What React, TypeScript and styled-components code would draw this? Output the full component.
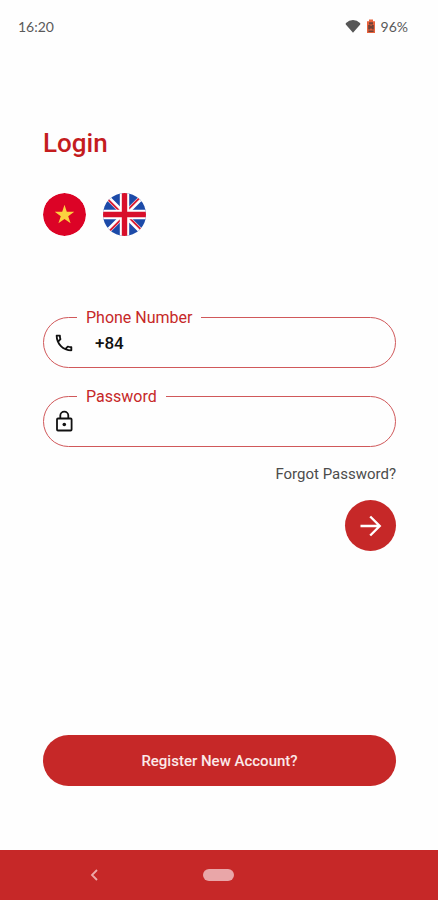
import React from 'react';
import styled, { createGlobalStyle } from 'styled-components';

const red = '#c62828';

const GlobalStyle = createGlobalStyle`
  *, *::before, *::after { box-sizing: border-box; }
  body {
    margin: 0;
    background: #fefefe;
    font-family: Roboto, "Liberation Sans", sans-serif;
    color: #1a1a1a;
  }
  button, input { font: inherit; }
`;

const Screen = styled.div`
  display: flex;
  flex-direction: column;
  min-height: 100vh;
`;

const StatusBar = styled.header`
  display: flex;
  align-items: center;
  justify-content: space-between;
  height: 52px;
  padding: 0 30px 0 18px;
  font-family: Lato, Roboto, sans-serif;
  font-size: 14px;
  color: #5a5a5a;
`;

const StatusGroup = styled.div`
  display: flex;
  align-items: center;
  gap: 5px;
`;

const Main = styled.main`
  display: flex;
  flex: 1;
  flex-direction: column;
  padding: 74px 42px 64px 43px;
`;

const Title = styled.h1`
  margin: 0;
  font-size: 26px;
  line-height: 34px;
  font-weight: 500;
  color: #c41c1e;
`;

const Languages = styled.div`
  display: flex;
  gap: 17px;
  margin-top: 33px;
`;

const FlagButton = styled.button`
  width: 43px;
  height: 43px;
  padding: 0;
  border: 0;
  border-radius: 50%;
  background: none;
  overflow: hidden;
  cursor: pointer;

  svg { display: block; width: 100%; height: 100%; }
`;

const Form = styled.form`
  display: flex;
  flex-direction: column;
  align-items: flex-end;
  margin-top: 71px;
`;

const Fieldset = styled.fieldset`
  width: 100%;
  min-width: 0;
  margin: 0 0 18px;
  padding: 0 12px 0 33px;
  border: 1px solid #d0585a;
  border-radius: 26px;
`;

const Legend = styled.legend`
  padding: 2px 9px 0;
  font-size: 16px;
  line-height: 18px;
  color: ${red};
`;

const FieldRow = styled.div`
  display: flex;
  align-items: center;
  gap: 20px;
  height: 40px;
  margin: 0 0 0 -24px;
  padding-bottom: 8px;

  svg { flex: none; }
`;

const Input = styled.input`
  flex: 1;
  min-width: 0;
  padding: 0;
  border: 0;
  outline: 0;
  background: transparent;
  font-size: 17px;
  line-height: 20px;
  font-weight: 500;
  color: #111;
`;

const ForgotLink = styled.a`
  font-size: 15px;
  line-height: 18px;
  color: #4c4c4c;
  text-decoration: none;
`;

const SubmitButton = styled.button`
  display: grid;
  place-items: center;
  width: 51px;
  height: 51px;
  margin-top: 17px;
  padding: 0;
  border: 0;
  border-radius: 50%;
  background: ${red};
  cursor: pointer;
`;

const RegisterButton = styled.button`
  height: 51px;
  margin-top: auto;
  border: 0;
  border-radius: 26px;
  background: ${red};
  font-size: 15px;
  font-weight: 500;
  color: #fbe9e9;
  cursor: pointer;
`;

const NavBar = styled.nav`
  display: grid;
  grid-template-columns: repeat(3, 1fr);
  align-items: center;
  justify-items: center;
  height: 50px;
  padding: 0 32px;
  background: ${red};
`;

const NavButton = styled.button`
  display: grid;
  place-items: center;
  width: 48px;
  height: 40px;
  padding: 0;
  border: 0;
  background: none;
  cursor: pointer;
`;

const HomePill = styled.span`
  width: 31px;
  height: 12px;
  border-radius: 6px;
  background: #e9a6a8;
`;

const WifiIcon = () => (
  <svg width="16" height="14" viewBox="0 0 16 14" aria-hidden="true">
    <path d="M8 13.8 0.8 5.4Q0.4 4.6 1 4Q4 1 8 1t7 3q.6.6.2 1.4Z" fill="#565656" />
  </svg>
);

const BatteryIcon = () => (
  <svg width="10" height="15" viewBox="0 0 10 15" aria-hidden="true">
    <path d="M3 .5h4v1.7h2V14H1V2.2h2Z" fill="#e8623c" />
    <path d="M3 3.2h4v2.3H3ZM2.4 11.4h5.2V13H2.4ZM2.2 6h2l.8 1.2L6 6h1.8v4.4H6L5 9l-1 1.4H2.2Z" fill="#6f4238" />
  </svg>
);

const VietnamFlag = () => (
  <svg viewBox="0 0 43 43" aria-hidden="true">
    <circle cx="21.5" cy="21.5" r="21.5" fill="#dc0326" />
    <path
      d="m21.5 11.7 2.3 7.1h7.5l-6.1 4.4 2.4 7.1-6.1-4.4-6.1 4.4 2.4-7.1-6.1-4.4h7.5Z"
      fill="#fbd03f"
    />
  </svg>
);

const UnitedKingdomFlag = () => (
  <svg viewBox="0 0 43 43" aria-hidden="true">
    <rect width="43" height="43" fill="#1c4aa8" />
    <path d="M4 4 39 39M39 4 4 39" stroke="#fff" strokeWidth="5" />
    <path d="m5 6.5 13 13M36.5 5 23 18.5M38 36.5 25 23.5M6.5 38l13-13" stroke="#d81e35" strokeWidth="1.8" />
    <path d="M21.5 0v43M0 21.5h43" stroke="#fff" strokeWidth="9.4" />
    <path d="M21.5 0v43M0 21.5h43" stroke="#d80f2b" strokeWidth="5.4" />
  </svg>
);

const PhoneIcon = () => (
  <svg width="22" height="22" viewBox="0 0 24 24" aria-hidden="true">
    <path
      d="M6.54 5c.06.89.21 1.76.45 2.59l-1.2 1.2c-.41-1.2-.67-2.47-.76-3.79h1.51m9.86 12.02c.85.24 1.72.39 2.6.45v1.49c-1.32-.09-2.59-.35-3.8-.75l1.2-1.19M7.5 3H4c-.55 0-1 .45-1 1 0 9.39 7.61 17 17 17 .55 0 1-.45 1-1v-3.49c0-.55-.45-1-1-1-1.24 0-2.45-.2-3.57-.57-.1-.04-.21-.05-.31-.05-.26 0-.51.1-.71.29l-2.2 2.2c-2.83-1.45-5.15-3.76-6.59-6.59l2.2-2.2c.28-.28.36-.67.25-1.02C8.7 6.45 8.5 5.25 8.5 4c0-.55-.45-1-1-1Z"
      fill="#111"
    />
  </svg>
);

const LockIcon = () => (
  <svg width="22" height="24" viewBox="0 0 22 24" fill="none" aria-hidden="true">
    <rect x="4" y="8.5" width="14.6" height="12" rx="1" stroke="#111" strokeWidth="1.8" />
    <path d="M7.3 8.5V5.6a4 4 0 0 1 8 0v2.9" stroke="#111" strokeWidth="1.8" />
    <circle cx="11.3" cy="14.5" r="1.8" fill="#111" />
  </svg>
);

const ArrowIcon = () => (
  <svg width="24" height="24" viewBox="0 0 24 24" fill="none" aria-hidden="true">
    <path d="M1.5 12h19M11.2 2.5l9.5 9.5-9.5 9.5" stroke="#fff" strokeWidth="2.4" />
  </svg>
);

const BackIcon = () => (
  <svg width="8" height="12" viewBox="0 0 8 12" fill="none" aria-hidden="true">
    <path d="M7 1 2 6l5 5" stroke="#eda9a9" strokeWidth="1.8" />
  </svg>
);

type FieldProps = {
  id: string;
  label: string;
  type: string;
  defaultValue?: string;
  icon: React.ReactNode;
};

const Field = ({ id, label, type, defaultValue, icon }: FieldProps) => (
  <Fieldset>
    <Legend>
      <label htmlFor={id}>{label}</label>
    </Legend>
    <FieldRow>
      {icon}
      <Input id={id} type={type} defaultValue={defaultValue} />
    </FieldRow>
  </Fieldset>
);

export default function App() {
  return (
    <>
      <GlobalStyle />
      <Screen>
        <StatusBar>
          <span>16:20</span>
          <StatusGroup>
            <WifiIcon />
            <BatteryIcon />
            <span>96%</span>
          </StatusGroup>
        </StatusBar>
        <Main>
          <Title>Login</Title>
          <Languages>
            <FlagButton type="button" aria-label="Tiếng Việt">
              <VietnamFlag />
            </FlagButton>
            <FlagButton type="button" aria-label="English">
              <UnitedKingdomFlag />
            </FlagButton>
          </Languages>
          <Form onSubmit={(event) => event.preventDefault()}>
            <Field id="phone" label="Phone Number" type="tel" defaultValue="+84" icon={<PhoneIcon />} />
            <Field id="password" label="Password" type="password" icon={<LockIcon />} />
            <ForgotLink href="#forgot">Forgot Password?</ForgotLink>
            <SubmitButton type="submit" aria-label="Log in">
              <ArrowIcon />
            </SubmitButton>
          </Form>
          <RegisterButton type="button">Register New Account?</RegisterButton>
        </Main>
        <NavBar>
          <NavButton type="button" aria-label="Back">
            <BackIcon />
          </NavButton>
          <NavButton type="button" aria-label="Home">
            <HomePill />
          </NavButton>
        </NavBar>
      </Screen>
    </>
  );
}
